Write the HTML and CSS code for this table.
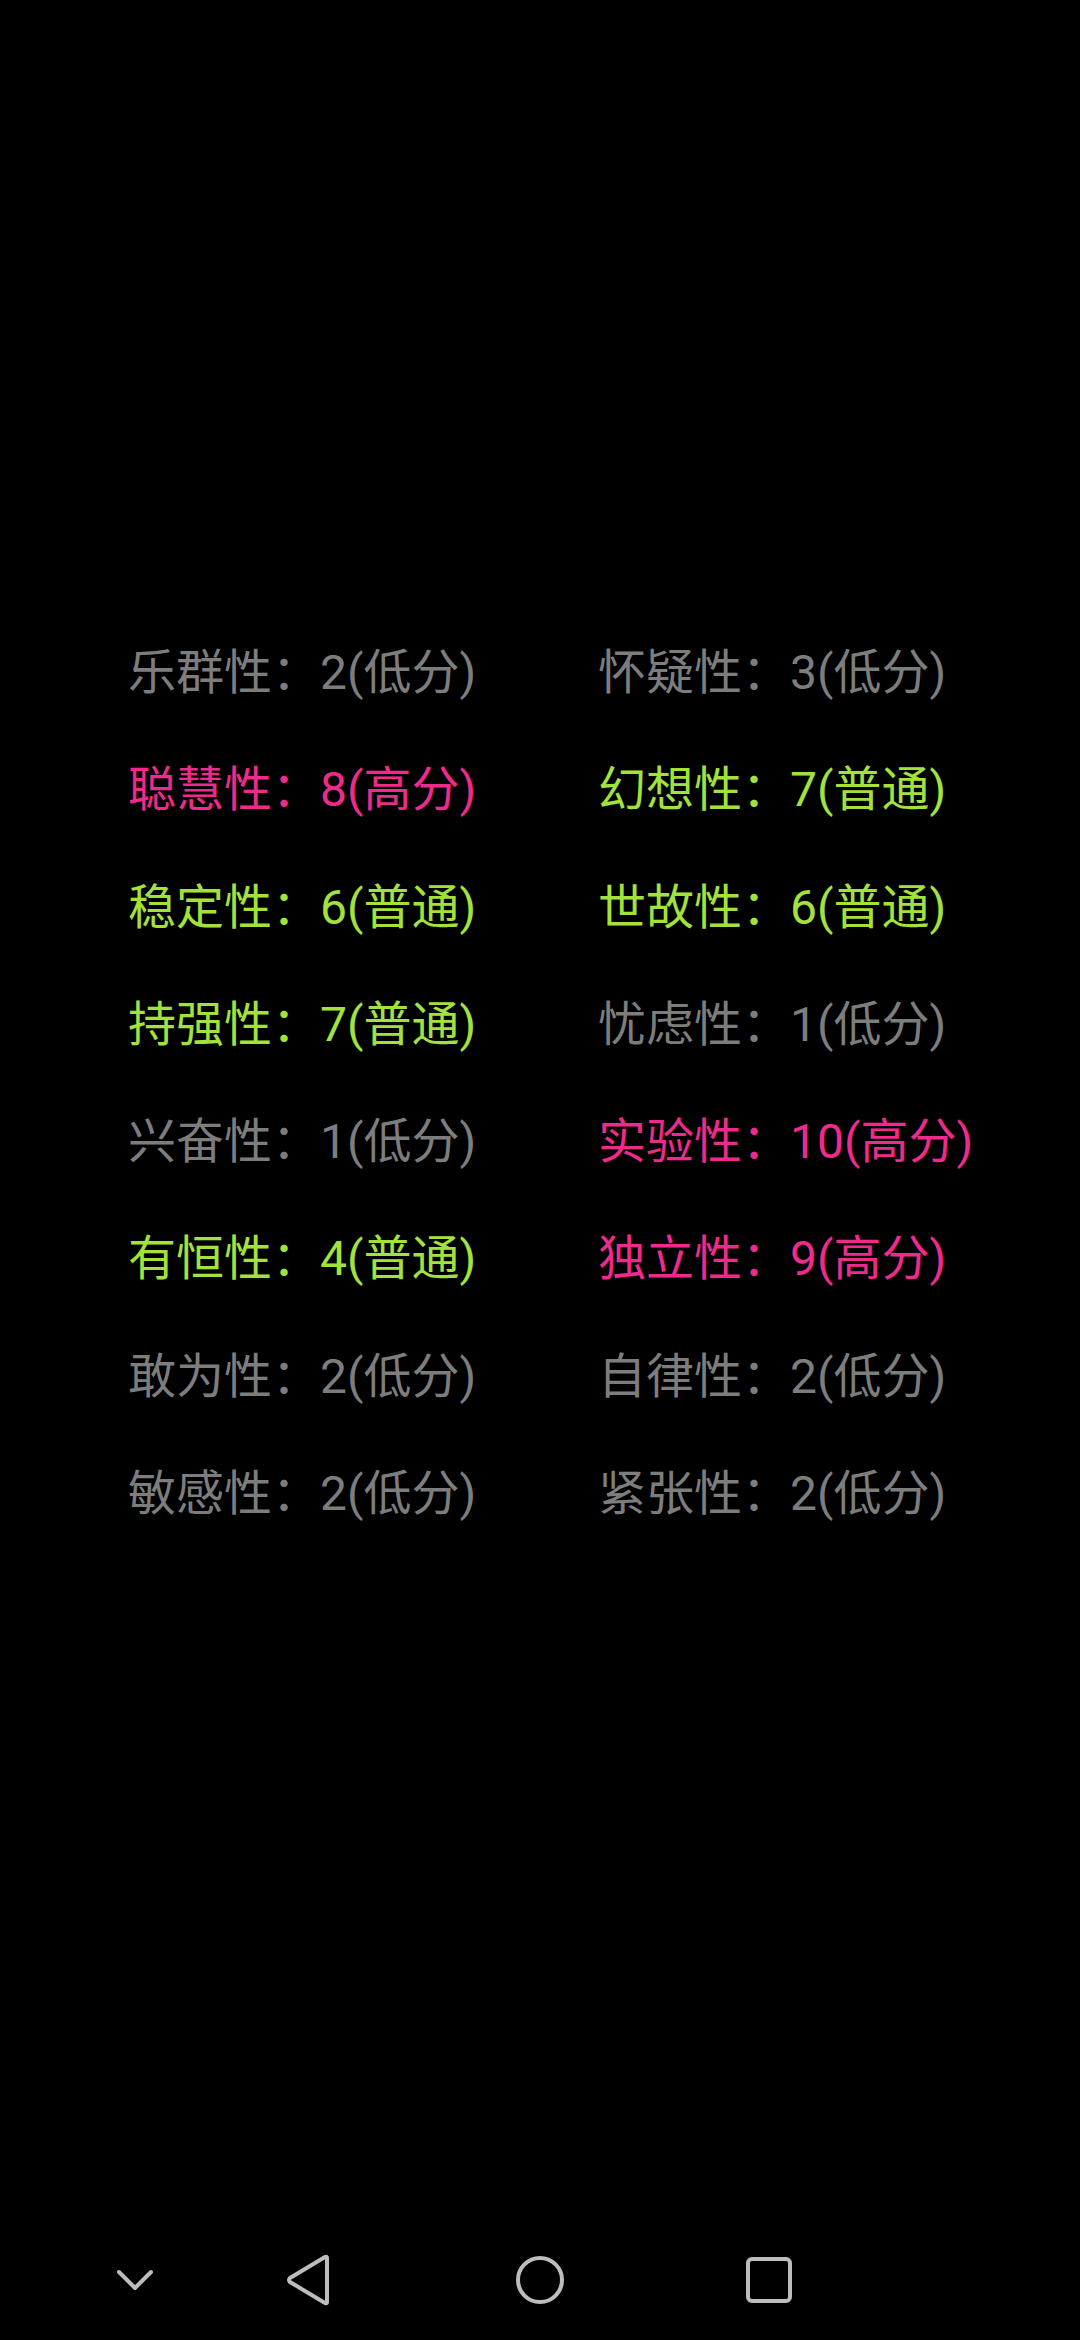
FILE: index.html
```html
<!DOCTYPE html>
<html lang="zh-CN">
<head>
<meta charset="utf-8">
<title>16PF</title>
<link rel="stylesheet" href="styles.css">
</head>
<body>
<div class="screen">
  <main class="results">
    <div class="item low">乐群性：2(低分)</div>
    <div class="item low">怀疑性：3(低分)</div>
    <div class="item high">聪慧性：8(高分)</div>
    <div class="item mid">幻想性：7(普通)</div>
    <div class="item mid">稳定性：6(普通)</div>
    <div class="item mid">世故性：6(普通)</div>
    <div class="item mid">持强性：7(普通)</div>
    <div class="item low">忧虑性：1(低分)</div>
    <div class="item low">兴奋性：1(低分)</div>
    <div class="item high">实验性：10(高分)</div>
    <div class="item mid">有恒性：4(普通)</div>
    <div class="item high">独立性：9(高分)</div>
    <div class="item low">敢为性：2(低分)</div>
    <div class="item low">自律性：2(低分)</div>
    <div class="item low">敏感性：2(低分)</div>
    <div class="item low">紧张性：2(低分)</div>
  </main>
  <nav class="navbar">
    <span class="nav-btn nav-hide">
      <svg width="48" height="48" viewBox="0 0 48 48"><polyline points="8,16 24,32 40,16" fill="none" stroke="#bdbdbd" stroke-width="4" stroke-linecap="round" stroke-linejoin="round"/></svg>
    </span>
    <span class="nav-btn nav-back">
      <svg width="48" height="52" viewBox="0 0 48 52"><path d="M43 4 L43 48 Q43 50 41 49 L6 28 Q4 26 6 24 L41 3 Q43 2 43 4 Z" fill="none" stroke="#bdbdbd" stroke-width="4" stroke-linejoin="round"/></svg>
    </span>
    <span class="nav-btn nav-home">
      <svg width="48" height="48" viewBox="0 0 48 48"><circle cx="24" cy="24" r="22" fill="none" stroke="#bdbdbd" stroke-width="4"/></svg>
    </span>
    <span class="nav-btn nav-recent">
      <svg width="48" height="48" viewBox="0 0 48 48"><rect x="3" y="3" width="42" height="42" rx="4" ry="4" fill="none" stroke="#bdbdbd" stroke-width="4"/></svg>
    </span>
  </nav>
</div>
</body>
</html>
```
FILE: styles.css
```css
html, body {
  margin: 0;
  padding: 0;
  background: #000;
}

.screen {
  width: 1080px;
  height: 2340px;
  display: flex;
  flex-direction: column;
  background: #000;
  overflow: hidden;
}

.results {
  flex: 1;
  display: grid;
  grid-template-columns: 470px 470px;
  grid-auto-rows: 117.3px;
  padding-top: 614px;
  padding-left: 128px;
  align-content: start;
}

.item {
  font-family: Roboto, "Noto Sans CJK SC", sans-serif;
  font-size: 48px;
  line-height: 117px;
  white-space: nowrap;
}

.low { color: #7d7d7d; }
.mid { color: #a3e23a; }
.high { color: #ee2a8c; }

.navbar {
  height: 120px;
  display: flex;
  align-items: center;
  padding-left: 111px;
}

.nav-btn {
  display: flex;
  align-items: center;
  justify-content: center;
  width: 48px;
  height: 52px;
}

.nav-back { margin-left: 125px; }
.nav-home { margin-left: 184px; }
.nav-recent { margin-left: 181px; }
```
